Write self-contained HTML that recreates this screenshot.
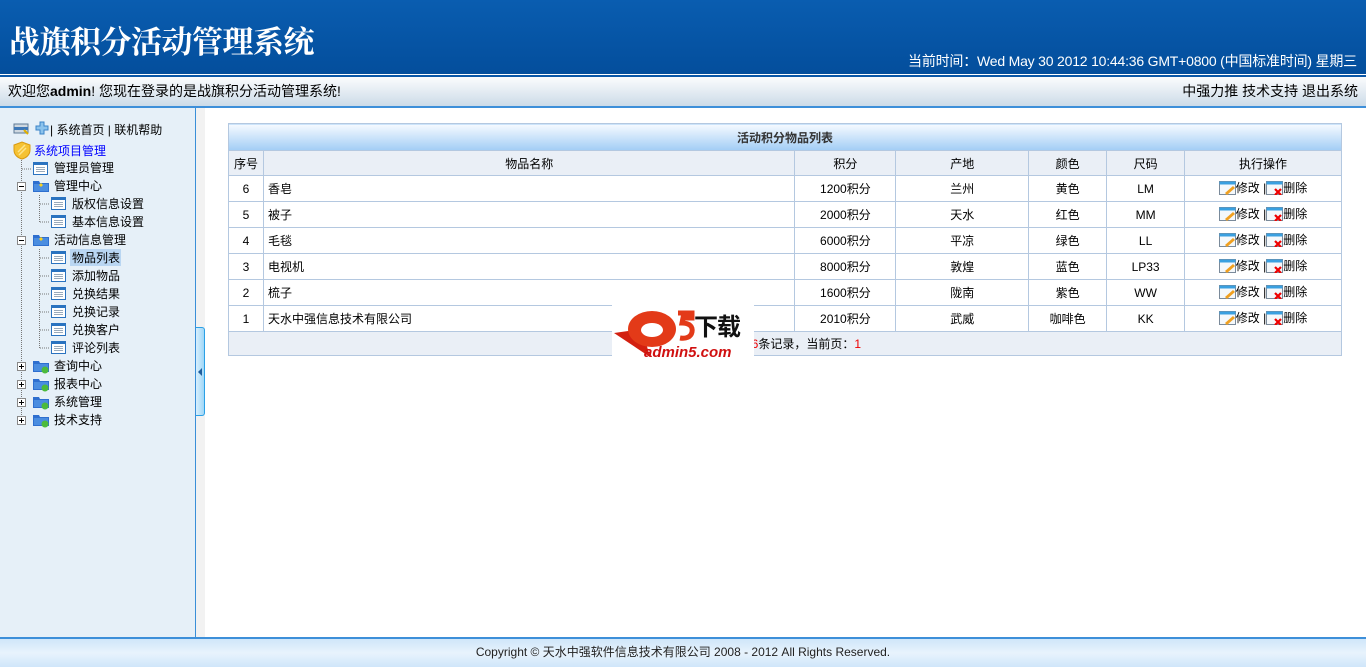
<!DOCTYPE html>
<html><head><meta charset="utf-8">
<style>
*{margin:0;padding:0;box-sizing:border-box}
body{width:1366px;height:667px;overflow:hidden;font-family:"Liberation Sans","Noto Sans CJK SC",sans-serif;font-size:12px;color:#000;background:#fff;position:relative}
#hd{position:absolute;left:0;top:0;width:1366px;height:74px;background:linear-gradient(#0a5db0,#034e9c)}
#hd h1{position:absolute;left:9px;top:17px;font-family:"Noto Serif CJK SC","Liberation Serif",serif;font-weight:bold;font-size:31px;color:#fff;letter-spacing:-0.5px}
#hd .time{position:absolute;right:9px;top:51px;color:#fff;font-size:14px;letter-spacing:-0.2px}
#l1{position:absolute;top:74px;left:0;width:1366px;height:1px;background:#fff}
#l2{position:absolute;top:75px;left:0;width:1366px;height:2px;background:#0a57a8}
#bar{position:absolute;top:77px;left:0;width:1366px;height:29px;background:linear-gradient(#fbfcfd,#ccdbe8);font-size:14px;line-height:29px;padding-left:8px}
#bar .r{position:absolute;right:8px;top:0}
#bl{position:absolute;top:106px;left:0;width:1366px;height:2px;background:#3d8fd9}
#side{position:absolute;left:0;top:108px;width:196px;height:529px;background:#e6f0f8;border-right:1px solid #3a8fd8}
#strip{position:absolute;left:196px;top:108px;width:9px;height:529px;background:#f2f2f2}
#tab{position:absolute;left:196px;top:327px;width:9px;height:89px;background:linear-gradient(90deg,#d9f0fd,#9fd6f7);border:1px solid #2aa0e6;border-left:none;border-radius:0 3px 3px 0}
#tab:after{content:"";position:absolute;left:2px;top:40px;border-right:4px solid #1e5d9c;border-top:4px solid transparent;border-bottom:4px solid transparent}
.ti{position:absolute;font-size:12px;line-height:16px;white-space:nowrap}
#ft{position:absolute;left:0;top:637px;width:1366px;height:30px;border-top:2px solid #3d8fd9;background:linear-gradient(#cfe6fa,#e8f3fc 50%,#cfe6fa);text-align:center;line-height:27px;font-size:12px;color:#222}
table{position:absolute;left:228px;top:123px;width:1114px;border-collapse:collapse;font-size:12px}
td,th{border:1px solid #b4c8e0;text-align:center;font-weight:normal;padding:0}
.cap td{height:27px;background:linear-gradient(#f6faff,#a2cdf5);font-weight:bold;color:#333}
.hr th{height:25px;background:#eaeff6}
.rw td{height:26px;background:#fff}
.rw td.l{text-align:left;padding-left:4px}
.fr td{height:24px;background:#eaeff6}
.red{color:#e00}
</style></head><body>
<div id="hd"><h1>战旗积分活动管理系统</h1><div class="time">当前时间：Wed May 30 2012 10:44:36 GMT+0800 (中国标准时间) 星期三</div></div>
<div id="l1"></div><div id="l2"></div>
<div id="bar">欢迎您<b>admin</b>! 您现在登录的是战旗积分活动管理系统!<span class="r">中强力推 技术支持 退出系统</span></div>
<div id="bl"></div>
<div id="side"></div>
<div id="strip"></div><div id="tab"></div>

<svg style="position:absolute;left:0;top:108px" width="195" height="330">
<defs>
<g id="pg"><rect x="0.5" y="0.5" width="14" height="12" fill="#fff" stroke="#2a73c0"/><rect x="0.5" y="0.5" width="14" height="2.5" fill="#2a73c0"/><path d="M3 5.5h9M3 7.5h9M3 9.5h9" stroke="#9ab" /></g>
<g id="fd"><path d="M0 3h6l1 2h9v9H0z" fill="#2e6fcf"/><path d="M1 6h14v7H1z" fill="#4a8de0"/></g>
</defs>
<rect x="14" y="16" width="14" height="9" fill="#cfd8e0" stroke="#5d7a96"/><rect x="14" y="19" width="14" height="3" fill="#3d78b8"/><path d="M24 22l4 4" stroke="#e0b000" stroke-width="2"/>
<path d="M36 18h4v-4h4v4h4v4h-4v4h-4v-4h-4z" fill="#8cc3ec" stroke="#3a83c8"/>
<path d="M14 37l8-3 8 3v5c0 5-4 8-8 9-4-1-8-4-8-9z" fill="#f5c233" stroke="#d99a10"/><path d="M18 44l7-7M19 47l7-7" stroke="#fde48a" stroke-width="1.5"/>
<path d="M21.5 52V313" stroke="#777" stroke-dasharray="1 1"/>
<path d="M22 61h10" stroke="#777" stroke-dasharray="1 1"/>
<path d="M39.5 87V114M39.5 141V240" stroke="#777" stroke-dasharray="1 1"/>
<path d="M40 96h10M40 114h10M40 150h10M40 168h10M40 186h10M40 204h10M40 222h10M40 240h10" stroke="#777" stroke-dasharray="1 1"/>
<use href="#pg" x="33" y="54"/>
<use href="#fd" x="33" y="70"/><path d="M41 75l2 2-2 2-2-2z" fill="#f8d020"/>
<use href="#pg" x="51" y="89"/><use href="#pg" x="51" y="107"/>
<use href="#fd" x="33" y="124"/><path d="M41 129l2 2-2 2-2-2z" fill="#f8d020"/>
<use href="#pg" x="51" y="143"/><use href="#pg" x="51" y="161"/><use href="#pg" x="51" y="179"/><use href="#pg" x="51" y="197"/><use href="#pg" x="51" y="215"/><use href="#pg" x="51" y="233"/>
<g><use href="#fd" x="33" y="250"/><circle cx="45" cy="262" r="3.5" fill="#4cbb3c"/></g>
<g><use href="#fd" x="33" y="268"/><circle cx="45" cy="280" r="3.5" fill="#4cbb3c"/></g>
<g><use href="#fd" x="33" y="286"/><circle cx="45" cy="298" r="3.5" fill="#4cbb3c"/></g>
<g><use href="#fd" x="33" y="304"/><circle cx="45" cy="316" r="3.5" fill="#4cbb3c"/></g>
<g fill="#fff" stroke="#888"><rect x="17.5" y="74.5" width="8" height="8"/><rect x="17.5" y="128.5" width="8" height="8"/><rect x="17.5" y="254.5" width="8" height="8"/><rect x="17.5" y="272.5" width="8" height="8"/><rect x="17.5" y="290.5" width="8" height="8"/><rect x="17.5" y="308.5" width="8" height="8"/></g>
<path d="M19 78.5h5M19 132.5h5M19 258.5h5M21.5 256v5M19 276.5h5M21.5 274v5M19 294.5h5M21.5 292v5M19 312.5h5M21.5 310v5" stroke="#000"/>
<rect x="70" y="141" width="51" height="17" fill="#b9d6f2"/>
</svg>
<div class="ti" style="left:50px;top:122px">| 系统首页 | 联机帮助</div>
<div class="ti" style="left:34px;top:143px;color:#00f">系统项目管理</div>
<div class="ti" style="left:54px;top:160px">管理员管理</div>
<div class="ti" style="left:54px;top:178px">管理中心</div>
<div class="ti" style="left:72px;top:196px">版权信息设置</div>
<div class="ti" style="left:72px;top:214px">基本信息设置</div>
<div class="ti" style="left:54px;top:232px">活动信息管理</div>
<div class="ti" style="left:72px;top:250px">物品列表</div>
<div class="ti" style="left:72px;top:268px">添加物品</div>
<div class="ti" style="left:72px;top:286px">兑换结果</div>
<div class="ti" style="left:72px;top:304px">兑换记录</div>
<div class="ti" style="left:72px;top:322px">兑换客户</div>
<div class="ti" style="left:72px;top:340px">评论列表</div>
<div class="ti" style="left:54px;top:358px">查询中心</div>
<div class="ti" style="left:54px;top:376px">报表中心</div>
<div class="ti" style="left:54px;top:394px">系统管理</div>
<div class="ti" style="left:54px;top:412px">技术支持</div>

<table>
<colgroup><col style="width:35px"><col style="width:532px"><col style="width:101px"><col style="width:133px"><col style="width:78px"><col style="width:78px"><col style="width:157px"></colgroup>
<tr class="cap"><td colspan="7">活动积分物品列表</td></tr>
<tr class="hr"><th>序号</th><th>物品名称</th><th>积分</th><th>产地</th><th>颜色</th><th>尺码</th><th>执行操作</th></tr>
<tr class="rw"><td>6</td><td class="l">香皂</td><td>1200积分</td><td>兰州</td><td>黄色</td><td>LM</td><td class="op"></td></tr>
<tr class="rw"><td>5</td><td class="l">被子</td><td>2000积分</td><td>天水</td><td>红色</td><td>MM</td><td class="op"></td></tr>
<tr class="rw"><td>4</td><td class="l">毛毯</td><td>6000积分</td><td>平凉</td><td>绿色</td><td>LL</td><td class="op"></td></tr>
<tr class="rw"><td>3</td><td class="l">电视机</td><td>8000积分</td><td>敦煌</td><td>蓝色</td><td>LP33</td><td class="op"></td></tr>
<tr class="rw"><td>2</td><td class="l">梳子</td><td>1600积分</td><td>陇南</td><td>紫色</td><td>WW</td><td class="op"></td></tr>
<tr class="rw"><td>1</td><td class="l">天水中强信息技术有限公司</td><td>2010积分</td><td>武威</td><td>咖啡色</td><td>KK</td><td class="op"></td></tr>
<tr class="fr"><td colspan="7">共1页，<span class="red">6</span>条记录，当前页：<span class="red">1</span></td></tr>
</table>
<script>
var op='<span style="display:inline-flex;align-items:center;gap:0"><svg width="17" height="14"><rect x=".5" y=".5" width="16" height="13" fill="#f4f8fb" stroke="#7a8a9a"/><rect x=".5" y=".5" width="16" height="3" fill="#3aa0e0"/><path d="M6 12l8-7 2 2-8 7z" fill="#f0a020"/></svg>修改 | <svg width="17" height="14"><rect x=".5" y=".5" width="16" height="13" fill="#f4f8fb" stroke="#7a8a9a"/><rect x=".5" y=".5" width="16" height="3" fill="#3aa0e0"/><path d="M9 8l6 6M15 8l-6 6" stroke="#e00" stroke-width="2.2"/></svg>删除</span>';
document.querySelectorAll('.op').forEach(function(e){e.innerHTML=op});
</script>
<div style="position:absolute;left:612px;top:303px;width:142px;height:57px;background:#fff">
<svg width="142" height="57" style="position:absolute;left:0;top:0"><path d="M2 30l28-4 8 28z" fill="#d32010"/><ellipse cx="40" cy="26" rx="24" ry="18" fill="#e33a18"/><ellipse cx="40" cy="27" rx="11" ry="7" fill="#fff"/><path d="M66 10h14v5h-9l-1 5c8 0 11 4 10 9-1 5-6 7-12 6" fill="none" stroke="#e33a18" stroke-width="5"/></svg>
<div style="position:absolute;left:82px;top:4px;font-size:24px;font-weight:bold;color:#111;letter-spacing:-1px">下载</div>
<div style="position:absolute;left:32px;top:41px;font-size:15px;font-weight:bold;font-style:italic;color:#d01010">admin5.com</div>
</div>
<div id="ft">Copyright © 天水中强软件信息技术有限公司 2008 - 2012 All Rights Reserved.</div>
</body></html>
